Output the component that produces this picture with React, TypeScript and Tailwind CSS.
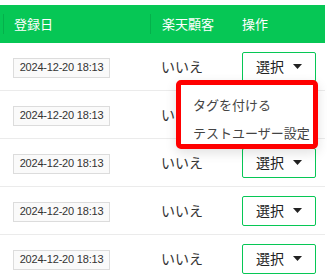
import React from 'react';

const rows = Array.from({ length: 5 }, () => ({
  createdAt: '2024-12-20 18:13',
  rakuten: 'いいえ',
}));

const Caret = () => (
  <svg width="9" height="5" viewBox="0 0 9 5" className="ml-[9px]">
    <path d="M0 0h9L4.5 5z" fill="#222" />
  </svg>
);

export default function App() {
  return (
    <div
      className="relative w-[327px] h-[280px] overflow-hidden bg-white pt-[5px]"
      style={{ fontFamily: '"Noto Sans CJK JP", "Noto Sans", sans-serif' }}
    >
      <div className="w-[325px]">
        {/* Header */}
        <div className="flex h-[38px] items-center bg-[#06c755] text-white text-[13px]">
          <div className="flex items-center w-[150px] h-full">
            <div className="ml-[3px] h-[20px] border-l border-[#05b04b]" />
            <span className="ml-[10px]">登録日</span>
          </div>
          <div className="flex items-center w-[81px] h-full">
            <div className="h-[20px] border-l border-[#05b04b]" />
            <span className="ml-[11px]">楽天顧客</span>
          </div>
          <div className="pl-[11px]">操作</div>
        </div>

        {/* Rows */}
        {rows.map((row, i) => (
          <div
            key={i}
            className="flex h-[48px] items-center border-b border-[#ebebeb] text-[14px] text-[#333]"
          >
            <div className="w-[150px] pl-[13px]">
              <span
                className="inline-flex h-[20px] w-[97px] items-center justify-center whitespace-nowrap border border-[#dcdcdc] bg-[#fafafa] text-[11px] tracking-[-0.2px] text-[#333]"
                style={{ fontFamily: '"Liberation Sans", Arial, sans-serif' }}
              >
                {row.createdAt}
              </span>
            </div>
            <div className="w-[81px] pl-[11px] text-[14px]">{row.rakuten}</div>
            <div className="pl-[11px]">
              <button className="flex h-[30px] w-[74px] items-center justify-center rounded-[2px] border border-[#06c755] bg-white text-[14px] text-[#222]">
                選択
                <Caret />
              </button>
            </div>
          </div>
        ))}
      </div>

      {/* Dropdown menu */}
      <div className="absolute left-[176px] top-[80px] w-[142px] h-[69px] rounded-[5px] border-[5px] border-[#ff0000] bg-white shadow-[0_4px_12px_rgba(0,0,0,0.12)] text-[13px] text-[#444]">
        <div className="flex flex-col pl-[12px] pt-[11px] gap-[10px] whitespace-nowrap">
          <div className="leading-[18px]">タグを付ける</div>
          <div className="leading-[18px]">テストユーザー設定</div>
        </div>
      </div>
    </div>
  );
}
